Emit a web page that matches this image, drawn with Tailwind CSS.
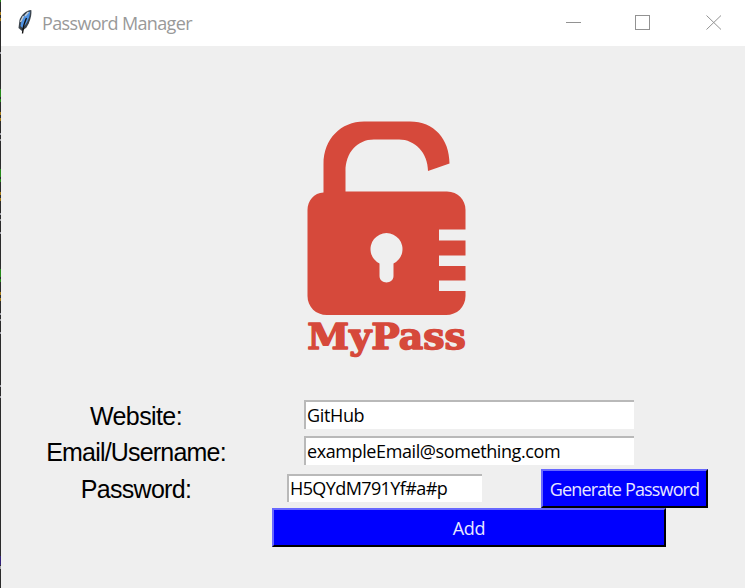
<!DOCTYPE html>
<html lang="en">
<head>
<meta charset="utf-8">
<title>Password Manager</title>
<script src="https://cdn.jsdelivr.net/npm/@tailwindcss/browser@4"></script>
</head>
<body class="flex h-[588px] w-[745px] overflow-hidden bg-[#efefef] font-['Open_Sans','Noto_Sans',sans-serif]">
<!-- sliver of the editor behind the window -->
<svg class="h-[588px] w-px shrink-0" viewBox="0 0 1 588" shape-rendering="crispEdges">
<rect width="1" height="588" fill="#2b2b2b"/>
<path fill="#258a19" d="M0 0h1v2H0zM0 89h1v8H0zM0 99h1v3H0zM0 169h1v8H0zM0 179h1v3H0zM0 269h1v8H0zM0 279h1v3H0z"/>
<path fill="#a57b18" d="M0 12h1v3H0zM0 18h1v3H0zM0 112h1v3H0zM0 118h1v3H0zM0 192h1v3H0zM0 198h1v3H0zM0 292h1v3H0zM0 298h1v3H0z"/>
<path fill="#a0a0a8" d="M0 52h1v2H0zM0 133h1v2H0zM0 139h1v2H0zM0 213h1v2H0zM0 219h1v2H0zM0 232h1v2H0zM0 313h1v2H0zM0 319h1v2H0zM0 332h1v2H0zM0 385h1v2H0zM0 396h1v2H0zM0 566h1v3H0z"/>
<rect y="556" width="1" height="9" fill="#32207a"/>
</svg>
<main class="flex w-[744px] flex-col">
<header class="flex h-[46px] shrink-0 items-center bg-white pl-4">
<svg class="-mt-[2px] h-[26px] w-4 shrink-0" viewBox="0 0 16 26">
<path d="M14.300 1C9 1.500 4 6 2.500 11L1.500 19L5 22L9.500 18.500C13 13 15 6 14.300 1Z" fill="#3a434c"/>
<path d="M13.200 2.500C8 4 4.500 9 3.500 17L5.500 19C10 15 13 8 13.200 2.500Z" fill="#4f92e2"/>
<path d="M6.500 7L3.500 13M11.500 3L8 7" stroke="#c3cdd5" stroke-width="1.500"/>
<path d="M9.500 9C7.500 13 6 17 5.500 24.500" fill="none" stroke="#111" stroke-width="1.300"/>
</svg>
<h1 class="ml-[9px] w-[300px] whitespace-nowrap text-[18px] font-normal leading-6 text-[#999] tracking-[-0.65px]">Password Manager</h1>
<svg class="ml-auto mr-[23px] mt-[-3px] h-4 w-[156px]" viewBox="0 0 156 16" fill="none" stroke="#929292">
<path d="M0 8.500H15M69.500 1.500H83.500V15.500H69.500Z" shape-rendering="crispEdges"/>
<path d="M140.500 1.500L155 15.500M155 1.500L140.500 15.500"/>
</svg>
</header>
<section class="flex h-[354px] shrink-0 justify-center pl-[29px] pt-[64px]">
<svg class="h-[260px] w-[185px]" viewBox="295 110 185 260">
<path fill="#d6493b" fill-rule="evenodd" d="M323.500 192.500V164C323.500 139 341 121.500 364 121.500H410C434 121.500 449.500 139 449.500 163.500L428 171C428 153 415 139.500 399 139.500H374C357 139.500 345.500 153 345.500 171V191.500H447C458 191.500 465.500 200 465.500 210V229.500H439V240.500H465.500V255.500H439V266H465.500V280.500H439V291H465.500V296C465.500 307 457 315 446 315H327C316 315 307.500 307 307.500 296V210C307.500 201 314 192.500 323.500 192.500ZM379.500 263.500V276C379.500 284.500 393.500 284.500 393.500 276V263.500A16 16 0 1 0 379.500 263.500Z"/>
<text x="307.300" y="348.800" textLength="158.500" lengthAdjust="spacingAndGlyphs" font-family="DejaVu Serif, serif" font-weight="bold" font-size="35.500" fill="#d6493b" stroke="#d6493b" stroke-width="1.500" stroke-linejoin="round">MyPass</text>
</svg>
</section>
<form class="flex flex-col text-[18px] leading-6 text-black">
<div class="flex h-[36px] items-start">
<label class="ml-[20px] w-[230px] pt-[4px] text-center font-['Liberation_Sans',sans-serif] text-[25px] leading-6 tracking-[-0.6px]">Website:</label>
<div class="ml-[53px] h-[29px] w-[330px] border-l-2 border-t-2 border-[#b9b9b9] bg-white pl-px pt-px tracking-[-0.35px]">GitHub</div>
</div>
<div class="flex h-[33px] items-start">
<label class="ml-[20px] w-[230px] pt-[4px] text-center font-['Liberation_Sans',sans-serif] text-[25px] leading-6 tracking-[-0.8px]">Email/Username:</label>
<div class="ml-[53px] h-[29px] w-[330px] border-l-2 border-t-2 border-[#b9b9b9] bg-white pl-px pt-px tracking-[-0.4px]">exampleEmail@something.com</div>
</div>
<div class="flex h-[39px] items-start">
<label class="ml-[20px] w-[230px] pt-[8px] text-center font-['Liberation_Sans',sans-serif] text-[25px] leading-6 tracking-[-0.7px]">Password:</label>
<div class="ml-[36px] mt-[5px] h-[28px] w-[195px] border-l-2 border-t-2 border-[#b9b9b9] bg-white pl-px tracking-[-0.6px]">H5QYdM791Yf#a#p</div>
<button type="button" class="ml-[59px] h-[39px] w-[167px] whitespace-nowrap border-2 border-b-black border-l-[#6868ff] border-r-black border-t-[#6868ff] bg-[#0000ff] px-0 text-[#e8e8ff] tracking-[-0.85px]">Generate Password</button>
</div>
<button type="button" class="ml-[271px] h-[39px] w-[394px] border-2 border-b-black border-l-[#6868ff] border-r-black border-t-[#6868ff] bg-[#0000ff] text-[#e8e8ff] tracking-[-0.3px]">Add</button>
</form>
</main>
</body>
</html>
